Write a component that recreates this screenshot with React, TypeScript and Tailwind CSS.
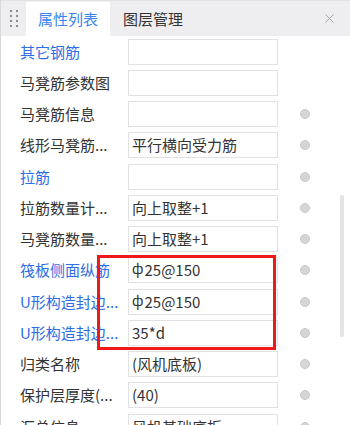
import { X } from "lucide-react";

type Row = { label: string; value?: string; blue?: boolean; dot?: boolean; rebar?: boolean };

const ROWS: Row[] = [
  { label: "其它钢筋", blue: true },
  { label: "马凳筋参数图" },
  { label: "马凳筋信息", dot: true },
  { label: "线形马凳筋...", value: "平行横向受力筋", dot: true },
  { label: "拉筋", blue: true, dot: true },
  { label: "拉筋数量计...", value: "向上取整+1", dot: true },
  { label: "马凳筋数量...", value: "向上取整+1", dot: true },
  { label: "筏板侧面纵筋", value: "25@150", blue: true, dot: true, rebar: true },
  { label: "U形构造封边...", value: "25@150", blue: true, dot: true, rebar: true },
  { label: "U形构造封边...", value: "35*d", blue: true, dot: true },
  { label: "归类名称", value: "(风机底板)", dot: true },
  { label: "保护层厚度(...", value: "(40)", dot: true },
  { label: "汇总信息", value: "风机基础底板", dot: true },
];

export default function App() {
  return (
    <div
      className="relative w-[350px] h-[425px] overflow-hidden bg-white border-l border-[#d8d8d8] text-[15px] text-[#333]"
      style={{ fontFamily: '"Noto Sans CJK SC", "Noto Sans", sans-serif' }}
    >
      {/* tab bar */}
      <div className="flex items-end h-9 bg-[#eeeef0] border-t border-[#e2e2e2]">
        <div className="w-[25px] h-full flex items-center justify-center">
          <div className="grid grid-cols-2 gap-x-[4px] gap-y-[3px]">
            {Array.from({ length: 8 }).map((_, i) => (
              <span key={i} className="w-[2px] h-[2px] bg-[#8c8c8c]" />
            ))}
          </div>
        </div>
        <div className="h-[34px] w-[84px] bg-white flex items-center justify-center text-[#3a84ee] leading-[20px]">
          属性列表
        </div>
        <div className="h-[34px] px-[13px] flex items-center leading-[20px] text-[#333]">图层管理</div>
        <div className="flex-1" />
        <div className="h-full w-[42px] flex items-center justify-center text-[#9a9a9a]">
          <X size={15} strokeWidth={1.3} />
        </div>
      </div>

      {/* property list */}
      <div className="flex flex-col">
        {ROWS.map((r, i) => (
          <div key={i} className="flex items-center h-[31.25px] shrink-0">
            <div
              className={`w-[108px] ml-[19px] whitespace-nowrap leading-[20px] ${
                r.blue ? "text-[#2d6de6]" : "text-[#333]"
              }`}
            >
              {r.label}
            </div>
            <div className="w-[150px] h-[26px] border-[1.5px] border-[#e2e2e2] flex items-center pl-[3px] leading-[20px] whitespace-nowrap">
              {r.rebar && <span className="text-[14px] mr-[1px] -translate-y-[2px]">ф</span>}
              {r.value}
            </div>
            <div className="w-[54px] flex justify-center">
              {r.dot && <span className="w-[10px] h-[10px] rounded-full bg-[#d6d6d6] border border-[#c8c8c8]" />}
            </div>
          </div>
        ))}
      </div>

      {/* scrollbar thumb */}
      <div className="absolute left-[339px] top-[195px] w-[4px] h-[142px] rounded-full bg-[#e4e4e4]" />

      {/* highlight box */}
      <div className="absolute left-[96px] top-[255px] w-[179px] h-[95px] border-[3px] border-[#ee1a1a]" />
    </div>
  );
}
